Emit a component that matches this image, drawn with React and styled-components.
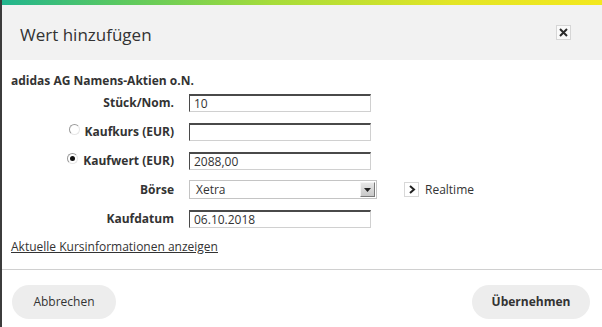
import React, {useState} from 'react';
import styled, {createGlobalStyle} from 'styled-components';

const Global = createGlobalStyle`
  html, body {
    margin: 0;
    padding: 0;
    background: #ffffff;
  }
  body {
    font-family: "Open Sans", "Liberation Sans", sans-serif;
    color: #333;
  }
`

function Radio({checked, onClick}) {
  return <RadioDot checked={checked} onClick={onClick} />
}

function App() {
  const [mode, setMode] = useState('wert')
  const [stueck, setStueck] = useState('10')
  const [kurs, setKurs] = useState('')
  const [wert, setWert] = useState('2088,00')
  const [datum, setDatum] = useState('06.10.2018')

  return (
    <Dialog>
      <Global />
      <TopBar />
      <Header>
        <Title>Wert hinzufügen</Title>
        <CloseBox>
          <svg width="9" height="9" viewBox="0 0 9 9">
            <path d="M1 1 L8 8 M8 1 L1 8" stroke="#2b2b2b" strokeWidth="2" />
          </svg>
        </CloseBox>
      </Header>
      <Body>
        <Security>adidas AG Namens-Aktien o.N.</Security>
        <Form>
          <Label>Stück/Nom.</Label>
          <Field><Input value={stueck} onChange={e => setStueck(e.target.value)} /></Field>

          <Label><Radio checked={mode === 'kurs'} onClick={() => setMode('kurs')} />Kaufkurs (EUR)</Label>
          <Field><Input value={kurs} onChange={e => setKurs(e.target.value)} /></Field>

          <Label><Radio checked={mode === 'wert'} onClick={() => setMode('wert')} />Kaufwert (EUR)</Label>
          <Field><Input value={wert} onChange={e => setWert(e.target.value)} /></Field>

          <Label>Börse</Label>
          <Field>
            <Select>
              <span>Xetra</span>
              <DropButton>
                <svg width="7" height="4" viewBox="0 0 7 4"><path d="M0 0 L7 0 L3.5 4 Z" fill="#222" /></svg>
              </DropButton>
            </Select>
            <Realtime>
              <ArrowBox>
                <svg width="8" height="9" viewBox="0 0 8 9"><path d="M2 1 L6 4.5 L2 8" stroke="#222" strokeWidth="2" fill="none" /></svg>
              </ArrowBox>
              Realtime
            </Realtime>
          </Field>

          <Label>Kaufdatum</Label>
          <Field><Input value={datum} onChange={e => setDatum(e.target.value)} /></Field>
        </Form>
        <InfoLink href="#">Aktuelle Kursinformationen anzeigen</InfoLink>
      </Body>
      <Footer>
        <PillButton>Abbrechen</PillButton>
        <PillButton primary>Übernehmen</PillButton>
      </Footer>
    </Dialog>
  );
}

const Dialog = styled.div`
  width: 602px;
  height: 327px;
  box-sizing: border-box;
  border-left: 2px solid #3c3c3c;
  display: flex;
  flex-direction: column;
  overflow: hidden;
  background: #fff;
`

const TopBar = styled.div`
  height: 5px;
  flex: none;
  background: linear-gradient(90deg, #22b58e 0%, #5cc960 20%, #a6dc3a 45%, #e3e526 75%, #f3e81e 100%);
`

const Header = styled.header`
  height: 55px;
  flex: none;
  background: #f2f2f2;
  display: flex;
  align-items: center;
  justify-content: space-between;
  padding: 0 31px 0 18px;
`

const Title = styled.h1`
  margin: 0;
  font-size: 17px;
  font-weight: 400;
  color: #333;
  padding-top: 4px;
`

const CloseBox = styled.div`
  width: 13px;
  height: 13px;
  border: 1px solid #d6d6d6;
  background: #fafafa;
  display: flex;
  align-items: center;
  justify-content: center;
`

const Body = styled.div`
  padding: 13px 0 0 9px;
  flex: 1;
  border-bottom: 1px solid #d0d0d0;
`

const Security = styled.div`
  font-size: 12px;
  font-weight: 700;
  line-height: 16px;
  color: #333;
`

const Form = styled.div`
  display: grid;
  grid-template-columns: 163px auto;
  column-gap: 15px;
  grid-auto-rows: 29px;
  margin-top: -1px;
`

const Label = styled.div`
  display: flex;
  align-items: center;
  justify-content: flex-end;
  font-size: 12px;
  font-weight: 700;
  color: #333;
  gap: 5px;
`

const RadioDot = styled.span`
  width: 9px;
  height: 9px;
  border-radius: 50%;
  border: 1px solid;
  border-color: #9a9a9a #e6e6e6 #e6e6e6 #9a9a9a;
  background: #fff;
  position: relative;
  top: -2px;
  cursor: pointer;
  &::after {
    content: '';
    display: ${p => p.checked ? 'block' : 'none'};
    position: absolute;
    left: 2px;
    top: 2px;
    width: 5px;
    height: 5px;
    border-radius: 50%;
    background: #111;
  }
`

const Field = styled.div`
  display: flex;
  align-items: center;
`

const Input = styled.input`
  width: 182px;
  height: 18px;
  box-sizing: border-box;
  border: 1px solid;
  border-color: #4a4a4a #d0d0d0 #d0d0d0 #4a4a4a;
  border-top-width: 2px;
  padding: 0 4px;
  font-family: "Open Sans", "Liberation Sans", sans-serif;
  font-size: 12px;
  color: #333;
  outline: none;
  background: #fff;
`

const Select = styled.div`
  width: 188px;
  height: 19px;
  box-sizing: border-box;
  border: 1px solid #c4c4c4;
  display: flex;
  align-items: center;
  justify-content: space-between;
  font-size: 12px;
  color: #333;
  padding-left: 6px;
  background: #fff;
`

const DropButton = styled.div`
  width: 15px;
  height: 15px;
  margin-right: 1px;
  box-sizing: border-box;
  border: 1px solid;
  border-color: #f4f4f4 #7a7a7a #7a7a7a #f4f4f4;
  background: linear-gradient(#e6e6e6, #c8c8c8);
  display: flex;
  align-items: center;
  justify-content: center;
`

const Realtime = styled.div`
  display: flex;
  align-items: center;
  gap: 6px;
  margin-left: 27px;
  font-size: 12px;
  color: #333;
`

const ArrowBox = styled.span`
  width: 13px;
  height: 13px;
  border: 1px solid #d8d8d8;
  display: flex;
  align-items: center;
  justify-content: center;
`

const InfoLink = styled.a`
  display: inline-block;
  margin-top: 5px;
  font-size: 12px;
  color: #333;
  text-decoration: underline;
`

const Footer = styled.footer`
  height: 57px;
  flex: none;
  box-sizing: border-box;
  padding: 6px 12px 0 10px;
  display: flex;
  align-items: center;
  justify-content: space-between;
`

const PillButton = styled.button`
  height: 34px;
  border: none;
  border-radius: 17px;
  background: #ededed;
  font-family: "Open Sans", "Liberation Sans", sans-serif;
  font-size: 12px;
  font-weight: ${p => p.primary ? 700 : 400};
  color: #333;
  padding: 0 ${p => p.primary ? 18 : 21}px;
  min-width: ${p => p.primary ? 118 : 104}px;
  cursor: pointer;
`

export default App;
